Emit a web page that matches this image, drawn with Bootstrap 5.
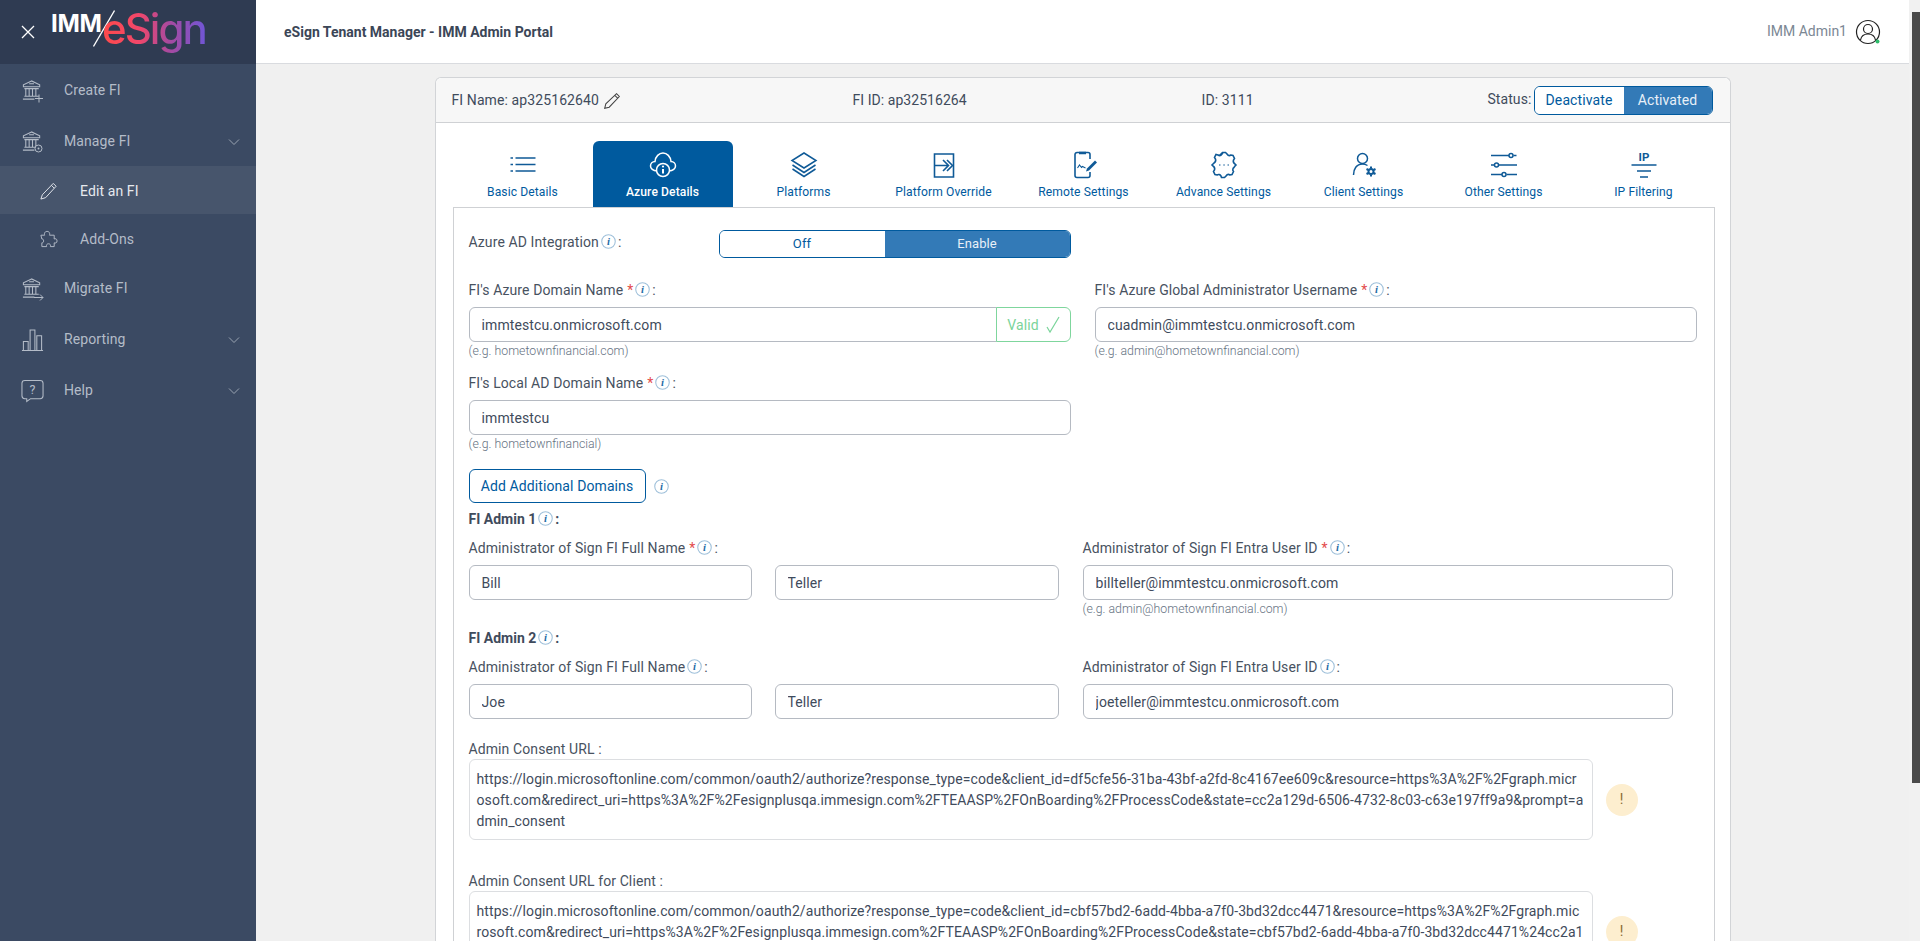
<!DOCTYPE html>
<html lang="en"><head><meta charset="utf-8"><title>eSign Tenant Manager</title>
<link href="https://cdn.jsdelivr.net/npm/bootstrap@5.3.0/dist/css/bootstrap.min.css" rel="stylesheet">
<style>
html,body{height:941px;overflow:hidden}
body{font-family:Roboto,"Liberation Sans",sans-serif;font-size:14px;letter-spacing:.1px;color:#3f4b5c;background:#f0f0f0}
.shell{height:941px}
.sidebar{width:256px;background:#3b4a63;color:#b4bcc8}
.brandbar{height:64px;background:#2f3b52;padding-left:21px;gap:14px}
.logotext{position:relative;width:158px;height:52px;line-height:1}
.logo-imm{position:absolute;left:2px;top:6px;color:#fff;font:700 24px/1 Inter,Roboto,sans-serif;letter-spacing:-.3px}
.logo-sign{position:absolute;left:53px;top:-2px;font:500 42px/1.2 Inter,Roboto,sans-serif;letter-spacing:-2px;background:linear-gradient(90deg,#ff4a4a 0%,#f2476a 35%,#a64aa0 65%,#7056d6 100%);-webkit-background-clip:text;background-clip:text;color:transparent}
.logo-slash{position:absolute;left:44px;top:4px}
.side-item{height:51px;padding:2px 0 0 21px;color:#b4bcc8;text-decoration:none;font-size:14px}
.side-item .side-ico{width:23px;height:24px;flex:none}
.side-item .side-lab{margin-left:20px;flex-grow:1}
.side-sub{height:48px;padding:2px 0 0 39px;color:#b4bcc8;text-decoration:none;font-size:14px}
.side-sub .side-ico{width:19px;height:20px;flex:none}
.side-sub .side-lab{margin-left:22px}
.side-active{background:#47556c;color:#e6e9ee}
.side-chev{width:12px;height:8px;margin-right:16px;flex:none}
.mainpane{min-width:0}
.topbar{height:64px;background:#fff;border-bottom:1px solid #d9dbdf;padding:0 28px}
.toptitle{font-weight:700;font-size:14px;letter-spacing:0;color:#3b4657;margin-top:2px}
.username{color:#7b8794;font-size:14px;letter-spacing:0}
.scrollfaux{width:11px;background:#f1f1f1;position:relative}
.scrollfaux .thumb{position:absolute;left:3px;right:0;top:12px;height:771px;background:#4a4a4a}
.pagebody{padding-top:13px;overflow:hidden}
.fi-card{width:1296px;border:1px solid #d2d4d7;border-radius:6px;background:#fff;border-bottom:0;border-bottom-left-radius:0;border-bottom-right-radius:0}
.fi-head{height:45px;background:#f7f7f7;border-bottom:1px solid #cfd1d4;border-radius:6px 6px 0 0;padding:0 17px 0 16px;font-size:14px}
.fi-a{width:401px;margin-top:1px}.fi-b{width:349px;margin-top:1px;letter-spacing:.05px}.fi-c{flex-grow:1;margin-top:1px}
.statuslab{margin-right:2px;position:relative;top:-1px}
.seg{border:1px solid #005a9e;border-radius:6px;overflow:hidden;display:flex;font-size:14px}
.seg span{display:flex;align-items:center;justify-content:center;color:#005a9e;background:#fff}
.seg span.on{background:#337ab7;color:#e8f0f8}
.seg-status{height:29px;width:179px}
.seg-status span:first-child{width:89px}.seg-status span:last-child{flex-grow:1}
.seg-az{height:28px;width:352px;font-size:13px}
.seg-az span:first-child{width:165px}.seg-az span:last-child{flex-grow:1}
.tabstrip{margin:18px 16px 0 17px;height:66px}
.tabitem{flex:1 1 0;color:#005a9e;font-size:12.1px;text-decoration:none;border-radius:6px 6px 0 0;padding-top:8px;line-height:18px}
.tabitem svg{width:28px;height:28px;display:block;margin:2px auto 4px;color:#0f5a97}
.tabitem.tabon{background:#005a9e;color:#fff;font-weight:500;margin-right:1px}
.tabitem.tabon svg{color:#fff}
.formbox{margin:0 15px 0 17px;border:1px solid #cfd1d4;border-bottom:0;padding:22px 17px 0 15px;height:760px}
.lab{line-height:20px;font-size:14px;margin:0 0 7px;color:#48525f;display:flex;align-items:center;white-space:nowrap}
.lab .req{color:#e34b4b;margin-left:4px}
.lab svg,.inf{width:15px;height:15px;margin-left:2px;margin-right:2px;flex:none;position:relative;top:-1px}
.colrow{--bs-gutter-x:24px}
.fld{height:35px;border:1px solid #b5bac2;border-radius:6px;padding:0 12px;font-size:14px;letter-spacing:.1px;color:#3f4b5c;box-shadow:none}
.hint{line-height:18px;font-size:12.3px;font-weight:300;letter-spacing:0;color:#65717f;height:18px}
.valid-addon{width:75px;flex:none;height:35px;border:1px solid #7fd69d;border-radius:0 6px 6px 0;color:#7ad49a;margin-left:-1px;background:#fff;font-size:14px;gap:7px;padding:1px 0 0 1px;position:relative}
.addbtn{height:34px;width:177px;border:1px solid #005a9e;border-radius:6px;color:#005a9e;background:#fff;font-size:14px;padding:1px 0 0;letter-spacing:.1px}
.sect{line-height:20px;font-weight:700;font-size:14px;letter-spacing:0;color:#3f4b5c;display:flex;align-items:center}
.urlbox{width:1124px;height:81px;border:1px solid #dcdee1;border-radius:6px;padding:9px 7px 7px;line-height:21px;font-size:14px;letter-spacing:.09px;white-space:nowrap;overflow:hidden;color:#3f4b5c;flex:none}
.warnc{width:32px;height:32px;border-radius:50%;background:#fdeecf;color:#8a6a2f;margin-left:13px;font-size:14px;flex:none}
.adminwrap{width:1204px}
.nameGrid{display:grid;grid-template-columns:283px 284px;column-gap:23px}
</style></head>
<body>
<svg width="0" height="0" class="position-absolute">
<defs>
<symbol id="bank" viewBox="0 0 24 24" fill="none" stroke="currentColor" stroke-width="1.1"><path d="M11 1.500 2.500 5.500v2h17v-2z"/><path d="M8.500 4.500h5M3.500 9.500h15M5 10v7M8.500 10v7M12 10v7M15.500 10v7M3.500 17.500h15M2 20.500h12"/></symbol>
<symbol id="info" viewBox="0 0 14 14"><circle cx="7" cy="7" r="6.300" fill="#fff" stroke="#9fc0da" stroke-width="1"/><text x="7" y="10.300" text-anchor="middle" font-family="Liberation Serif,serif" font-style="italic" font-weight="700" font-size="10" fill="#1e6ca6">i</text></symbol>
<symbol id="chev" viewBox="0 0 12 8" fill="none" stroke="#9aa4b2" stroke-width="1"><path d="M1 1.500 6 6.500l5-5"/></symbol>
</defs></svg>
<div class="shell d-flex">
<aside class="sidebar d-flex flex-column flex-shrink-0">
 <div class="brandbar d-flex align-items-center">
  <svg width="14" height="14" viewBox="0 0 14 14" stroke="#fff" stroke-width="1.300"><path d="M1 1l12 12M13 1 1 13"/></svg>
  <div class="logotext">
   <span class="logo-imm">IMM</span>
   <svg class="logo-slash" width="22" height="37" viewBox="0 0 22 37"><path d="M21.500 .5 .5 36.500" stroke="#fff" stroke-width="1.300"/></svg>
   <span class="logo-sign">eSign</span>
  </div>
 </div>
 <a class="side-item d-flex align-items-center" href="#"><svg class="side-ico"><use href="#bank"/><path d="M18 15.500v8M14 19.500h8" stroke="currentColor" fill="none"/></svg><span class="side-lab">Create FI</span></a>
 <a class="side-item d-flex align-items-center" href="#"><svg class="side-ico"><use href="#bank"/><circle cx="17.500" cy="18.500" r="3.500" fill="#3b4a63" stroke="currentColor"/><circle cx="17.500" cy="18.500" r="1" fill="currentColor"/></svg><span class="side-lab">Manage FI</span><svg class="side-chev"><use href="#chev"/></svg></a>
 <a class="side-sub side-active d-flex align-items-center" href="#"><svg class="side-ico" viewBox="0 0 20 20" fill="none" stroke="currentColor" stroke-width="1"><path d="M15 2l3 3L7 17l-5 1.500L3.500 14zM13 4l3 3"/></svg><span class="side-lab">Edit an FI</span></a>
 <a class="side-sub d-flex align-items-center" href="#"><svg class="side-ico" viewBox="0 0 20 20" fill="none" stroke="currentColor" stroke-width="1"><path d="M2 6h4c-.5-1-.5-4 2.500-4S11.500 5 11 6h5v4c1-.5 3-.5 3 2s-2 2.500-3 2v4h-4c.5-2-.5-3-2-3s-2.500 1-2 3H3v-4c2.500.5 2.500-4.500 0-4z"/></svg><span class="side-lab">Add-Ons</span></a>
 <a class="side-item d-flex align-items-center" href="#"><svg class="side-ico"><use href="#bank"/><path d="M13 20.500h9M19 17.500l3 3-3 3" stroke="currentColor" fill="none"/></svg><span class="side-lab">Migrate FI</span></a>
 <a class="side-item d-flex align-items-center" href="#"><svg class="side-ico" viewBox="0 0 24 24" fill="none" stroke="currentColor" stroke-width="1.100"><path d="M1 23h22M2.500 22.500v-9h5v9M9.500 22.500V1.500h5v21M16.500 22.500V7.500h5v15"/></svg><span class="side-lab">Reporting</span><svg class="side-chev"><use href="#chev"/></svg></a>
 <a class="side-item d-flex align-items-center" href="#"><svg class="side-ico" viewBox="0 0 24 24" fill="none" stroke="currentColor" stroke-width="1.100"><path d="M4 1h16a3 3 0 0 1 3 3v13a3 3 0 0 1-3 3H10l-4 3v-3H4a3 3 0 0 1-3-3V4a3 3 0 0 1 3-3z"/><text x="12" y="15.500" text-anchor="middle" font-size="13" fill="currentColor" stroke="none" font-family="Roboto,sans-serif">?</text></svg><span class="side-lab">Help</span><svg class="side-chev"><use href="#chev"/></svg></a>
</aside>
<div class="mainpane d-flex flex-column flex-grow-1">
 <header class="topbar d-flex align-items-center justify-content-between flex-shrink-0">
  <span class="toptitle">eSign Tenant Manager - IMM Admin Portal</span>
  <span class="d-flex align-items-center gap-2 username">IMM Admin1
   <svg width="26" height="26" viewBox="0 0 26 26" fill="none" stroke="#222" stroke-width="1.200"><circle cx="13" cy="13" r="11.500"/><circle cx="13" cy="10" r="4.500"/><path d="M5.500 21c1-5 4-6 7.500-6s6.500 1 7.500 6"/><circle cx="22.500" cy="22.500" r="2" fill="#2ebd6b" stroke="none"/></svg>
  </span>
 </header>
 <div class="pagebody flex-grow-1">
  <div class="fi-card mx-auto">
   <div class="fi-head d-flex align-items-center">
    <div class="fi-a d-flex align-items-center gap-1">FI Name: ap325162640 <svg width="18" height="18" viewBox="0 0 16 16" fill="none" stroke="#444" stroke-width=".9"><path d="M12 1.500l2.500 2.500-9 9.500-4 1 1-4zM10.500 3l2.500 2.500"/></svg></div>
    <div class="fi-b">FI ID: ap32516264</div>
    <div class="fi-c">ID: 3111</div>
    <span class="statuslab">Status:</span>
    <div class="seg seg-status"><span>Deactivate</span><span class="on">Activated</span></div>
   </div>
   <nav class="tabstrip d-flex">
    <a class="tabitem text-center" href="#"><svg viewBox="0 0 28 28" fill="none" stroke="currentColor" stroke-width="1.600"><path d="M6.500 7h20M6.500 13.500h20M6.500 20h20M1.500 7h2.500M1.500 13.500h2.500M1.500 20h2.500"/></svg>Basic Details</a>
    <a class="tabitem tabon text-center" href="#"><svg viewBox="0 0 28 28" fill="none" stroke="currentColor" stroke-width="1.500"><path d="M8 20C4 20 1.500 17.500 1.500 15c0-2.500 2-4.500 4.500-4.500C6.500 5.500 10 2 14 2s7.500 3.500 8 8.500c2.500 0 4.500 2 4.500 4.500s-2.500 5-6.500 5"/><circle cx="14" cy="19" r="6.500" fill="#005a9e"/><path d="M14 18v4.500" stroke-width="2"/><circle cx="14" cy="15.500" r="1.100" fill="currentColor" stroke="none"/></svg>Azure Details</a>
    <a class="tabitem text-center" href="#"><svg viewBox="0 0 28 28" fill="none" stroke="currentColor" stroke-width="1.500"><path d="M14 2 26 9.500 14 17 2 9.500z"/><path d="M2.500 14 14 21.500 25.500 14M2.500 18 14 25.500 25.500 18"/></svg>Platforms</a>
    <a class="tabitem text-center" href="#"><svg viewBox="0 0 28 28" fill="none" stroke="currentColor" stroke-width="1.600"><path d="M4.500 3h19v23h-19z"/><path d="M4.500 14.500h13M13 9l5.500 5.500-5.500 5.500M17 9l5.500 5.500L17 20"/></svg>Platform Override</a>
    <a class="tabitem text-center" href="#"><svg viewBox="0 0 28 28" fill="none" stroke="currentColor" stroke-width="1.600"><path d="M20 8V3.500a2 2 0 0 0-2-2H7a2 2 0 0 0-2 2v21a2 2 0 0 0 2 2h11a2 2 0 0 0 2-2V21"/><path d="M9 2h7" stroke-width="2.500"/><path d="M7.500 17l2-3 2 2.500 1-1 3 1.500" stroke-width="1.100"/><path d="M17 17.500l8-8 2 2-8 8-3 1z" fill="currentColor" stroke="none"/></svg>Remote Settings</a>
    <a class="tabitem text-center" href="#"><svg viewBox="0 0 28 28" fill="none" stroke="currentColor" stroke-width="1.600"><path d="M11 3l1.500-1.500h3L17 3c1 1.500 2.500 2 4 1l2 .5 1.500 3-1 1.500c-.5 1.500 0 3 1.500 4l1 1-1 1-1 1.500c-1.500 1-1.500 3-.5 4l-1.500 3-2 .5c-1.500-1-3-.5-4 1l-1.500 1.500h-3L11 25c-1-1.500-2.500-2-4-1l-2-.5-1.500-3 1-1.500c.5-1.500 0-3-1.500-4l-1-1 1-1 1-1c1.500-1 2-2.500 1.500-4l-1-1.500 1.500-3 2 .5c1.500 1 3 .5 4-1z"/><path d="M9 14h1.500M13.300 14h1.500M17.500 14h1.500" stroke-width="1.100"/></svg>Advance Settings</a>
    <a class="tabitem text-center" href="#"><svg viewBox="0 0 28 28" fill="none" stroke="currentColor" stroke-width="1.500"><circle cx="12.500" cy="7.500" r="5"/><path d="M3.500 24c0-6 3-11 9-11 2 0 3.500.5 5 1.500"/><circle cx="21" cy="20.500" r="2.500" stroke-width="2"/><path d="M21 15.500v2M21 23.500v2M16.500 18l2 1M25.500 18l-2 1M16.500 23l2-1M25.500 23l-2-1" stroke-width="2"/></svg>Client Settings</a>
    <a class="tabitem text-center" href="#"><svg viewBox="0 0 28 28" fill="none" stroke="currentColor" stroke-width="1.500"><path d="M1 4.500h18M23.500 4.500h3M1 14h3M9 14h18M1 23.500h11M16.500 23.500H27"/><circle cx="21" cy="4.500" r="2"/><circle cx="6.500" cy="14" r="2"/><circle cx="14" cy="23.500" r="2"/></svg>Other Settings</a>
    <a class="tabitem text-center" href="#"><svg viewBox="0 0 28 28" fill="none" stroke="currentColor" stroke-width="1.600"><text x="14" y="10" text-anchor="middle" font-size="11.500" font-weight="700" fill="currentColor" stroke="none" font-family="Roboto,sans-serif">IP</text><path d="M1.500 14h25M7 20h14M10 26h8"/></svg>IP Filtering</a>
   </nav>
   <div class="formbox">
    <div class="d-flex align-items-center" style="height:28px">
     <div class="lab mb-0" style="width:250px;margin-top:-4px">Azure AD Integration<svg><use href="#info"/></svg>:</div>
     <div class="seg seg-az"><span>Off</span><span class="on">Enable</span></div>
    </div>
    <div class="row colrow" style="margin-top:22px">
     <div class="col-6">
      <div class="lab">FI's Azure Domain Name<span class="req">*</span><svg><use href="#info"/></svg>:</div>
      <div class="d-flex"><input class="form-control fld" style="border-radius:6px 0 0 6px" value="immtestcu.onmicrosoft.com"><div class="valid-addon d-flex align-items-center justify-content-center">Valid <svg width="14" height="18" viewBox="0 0 14 18" fill="none" stroke="#7ad49a" stroke-width="1.200"><path d="M1 11l3 5L13 1"/></svg></div></div>
      <div class="hint">(e.g. hometownfinancial.com)</div>
     </div>
     <div class="col-6">
      <div class="lab">FI's Azure Global Administrator Username<span class="req">*</span><svg><use href="#info"/></svg>:</div>
      <input class="form-control fld" value="cuadmin@immtestcu.onmicrosoft.com">
      <div class="hint">(e.g. admin@hometownfinancial.com)</div>
     </div>
    </div>
    <div class="row colrow" style="margin-top:13px">
     <div class="col-6">
      <div class="lab">FI's Local AD Domain Name<span class="req">*</span><svg><use href="#info"/></svg>:</div>
      <input class="form-control fld" value="immtestcu">
      <div class="hint">(e.g. hometownfinancial)</div>
     </div>
    </div>
    <div class="d-flex align-items-center" style="margin-top:16px"><button class="btn addbtn" type="button">Add Additional Domains</button><svg class="inf" style="margin-left:8px;top:0"><use href="#info"/></svg></div>
    <div class="sect" style="margin-top:6px">FI Admin 1<svg class="inf"><use href="#info"/></svg>:</div>
    <div class="adminwrap" style="margin-top:9px">
     <div class="row colrow">
      <div class="col-6">
       <div class="lab">Administrator of Sign FI Full Name<span class="req">*</span><svg><use href="#info"/></svg>:</div>
       <div class="nameGrid"><input class="form-control fld" value="Bill"><input class="form-control fld" value="Teller"></div>
      </div>
      <div class="col-6">
       <div class="lab">Administrator of Sign FI Entra User ID<span class="req">*</span><svg><use href="#info"/></svg>:</div>
       <input class="form-control fld" value="billteller@immtestcu.onmicrosoft.com">
       <div class="hint">(e.g. admin@hometownfinancial.com)</div>
      </div>
     </div>
    </div>
    <div class="sect" style="margin-top:10px">FI Admin 2<svg class="inf"><use href="#info"/></svg>:</div>
    <div class="adminwrap" style="margin-top:9px">
     <div class="row colrow">
      <div class="col-6">
       <div class="lab">Administrator of Sign FI Full Name<svg><use href="#info"/></svg>:</div>
       <div class="nameGrid"><input class="form-control fld" value="Joe"><input class="form-control fld" value="Teller"></div>
      </div>
      <div class="col-6">
       <div class="lab">Administrator of Sign FI Entra User ID<svg><use href="#info"/></svg>:</div>
       <input class="form-control fld" value="joeteller@immtestcu.onmicrosoft.com">
      </div>
     </div>
    </div>
    <div class="lab mb-0" style="margin-top:20px">Admin Consent URL :</div>
    <div class="d-flex align-items-center">
     <div class="urlbox">https://login.microsoftonline.com/common/oauth2/authorize?response_type=code&amp;client_id=df5cfe56-31ba-43bf-a2fd-8c4167ee609c&amp;resource=https%3A%2F%2Fgraph.micr<br>osoft.com&amp;redirect_uri=https%3A%2F%2Fesignplusqa.immesign.com%2FTEAASP%2FOnBoarding%2FProcessCode&amp;state=cc2a129d-6506-4732-8c03-c63e197ff9a9&amp;prompt=a<br>dmin_consent</div>
     <div class="warnc d-flex align-items-center justify-content-center">!</div>
    </div>
    <div class="lab mb-0" style="margin-top:31px">Admin Consent URL for Client :</div>
    <div class="d-flex align-items-center">
     <div class="urlbox">https://login.microsoftonline.com/common/oauth2/authorize?response_type=code&amp;client_id=cbf57bd2-6add-4bba-a7f0-3bd32dcc4471&amp;resource=https%3A%2F%2Fgraph.mic<br>rosoft.com&amp;redirect_uri=https%3A%2F%2Fesignplusqa.immesign.com%2FTEAASP%2FOnBoarding%2FProcessCode&amp;state=cbf57bd2-6add-4bba-a7f0-3bd32dcc4471%24cc2a1</div>
     <div class="warnc d-flex align-items-center justify-content-center">!</div>
    </div>
   </div>
  </div>
 </div>
</div>
<div class="scrollfaux flex-shrink-0"><div class="thumb"></div></div>
</div>
<script src="https://cdn.jsdelivr.net/npm/bootstrap@5.3.0/dist/js/bootstrap.bundle.min.js"></script>
</body></html>
